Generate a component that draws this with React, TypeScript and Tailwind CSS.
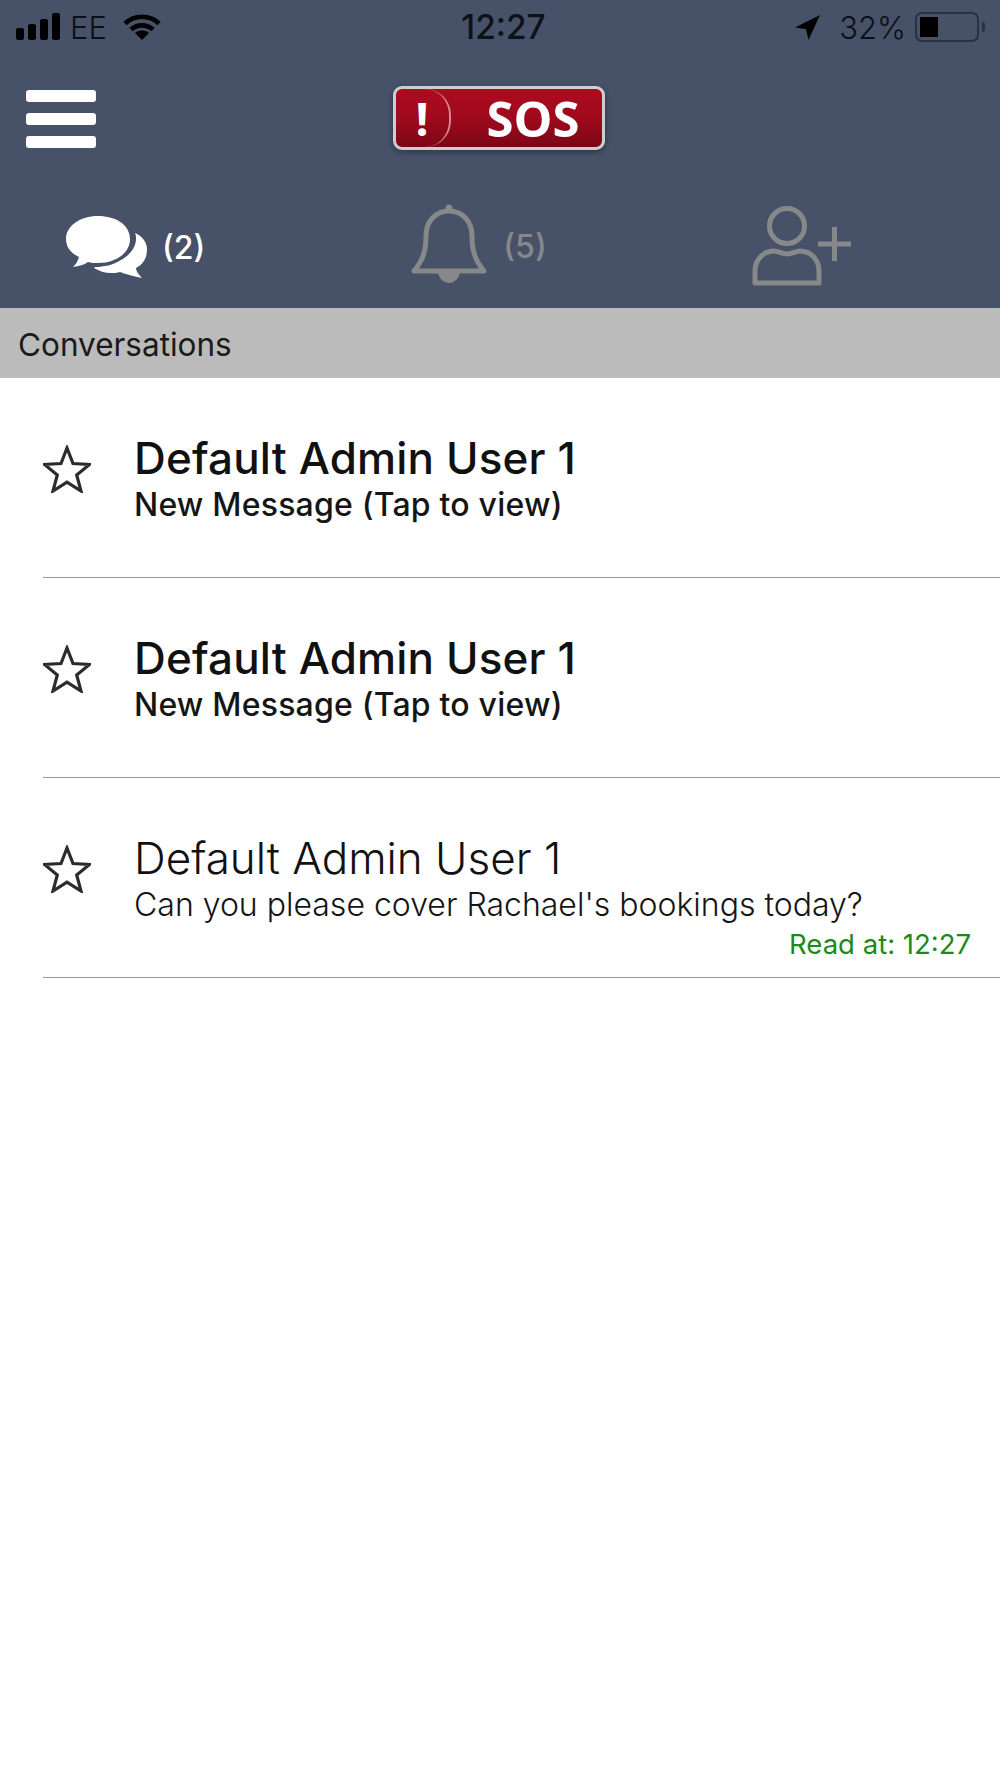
import React from 'react';

const rows = [
  { unread: true, title: 'Default Admin User 1', body: 'New Message (Tap to view)' },
  { unread: true, title: 'Default Admin User 1', body: 'New Message (Tap to view)' },
  { unread: false, title: 'Default Admin User 1', body: "Can you please cover Rachael's bookings today?", read: 'Read at: 12:27' },
];

const StatusBar: React.FC = () => (
  <div className="flex h-[54px] items-center justify-between pl-4 pr-[15px] text-[#0b0f17]">
    <div className="flex w-[340px] items-center">
      <svg width="45" height="28" viewBox="0 0 45 28" fill="#000">
        <rect x="0" y="15" width="8" height="12" rx="2" />
        <rect x="12" y="11" width="8" height="16" rx="2" />
        <rect x="24" y="6" width="8" height="21" rx="2" />
        <rect x="36" y="0" width="8" height="27" rx="2" />
      </svg>
      <span className="ml-[9px] w-[42px] text-[31px] font-light leading-none">EE</span>
      <svg className="ml-[11px]" width="38" height="28" viewBox="0 0 38 28" fill="none" stroke="#000" strokeWidth="4.6">
        <path d="M2 10.5C11.5 1.5 26.5 1.5 36 10.5" />
        <path d="M8 16.5C14 11 24 11 30 16.5" />
        <path d="M19 27l-7-7c4-3.2 10-3.2 14 0z" fill="#000" stroke="none" />
      </svg>
    </div>
    <span className="ml-[6px] mt-[2px] text-[33.5px] font-medium leading-none text-[#0d1118]">12:27</span>
    <div className="flex w-[340px] items-center justify-end">
      <svg width="26" height="26" viewBox="0 0 26 26" fill="#000">
        <path d="M25 1L0 13.5l11 1.5L13.500 26z" />
      </svg>
      <span className="ml-[18px] text-[31px] font-light leading-none">32%</span>
      <div className="relative ml-[9px] flex h-[30px] w-[64px] items-center rounded-[7px] border-2 border-[#2a3140] pl-[3px]">
        <div className="h-[20px] w-[18px] bg-black" />
      </div>
      <div className="ml-[3px] h-[10px] w-[3px] rounded-r-full bg-[#2a3140]" />
    </div>
  </div>
);

const Logo: React.FC = () => (
  <div className="flex h-[64px] w-[212px] items-center rounded-[9px] border-[3px] border-[#cfcdd0] bg-gradient-to-b from-[#ad0a20] via-[#a00a1c] to-[#7a0716] font-['Open_Sans',sans-serif] shadow-[0_2px_6px_rgba(0,0,0,0.35)]">
    <div className="flex h-full w-[55px] items-center justify-center rounded-r-[26px] border-r-2 border-[#d68a93] text-[46px] font-bold leading-none text-white">
      !
    </div>
    <span className="ml-[36px] text-[49px] font-bold leading-none text-white">SOS</span>
  </div>
);

const ChatIcon: React.FC = () => (
  <svg width="82" height="66" viewBox="0 0 82 66" fill="#fff">
    <path d="M32 1C14 1 0 11 0 24c0 7 4 14 13 18-1 4-3 7-6 10 6-1 11-2 15-5 3 1 7 1 10 1 18 0 32-10 32-24S50 1 32 1z" />
    <path d="M69 18c1 2 1 4 1 6 0 8-6 16-15 21-8 5-17 7-26 7l-1 1c5 3 11 5 17 5 3 0 6 0 9-1 5 2 17 5 22 6-3-3-6-7-6-10 7-4 11-9 11-19 0-7-5-13-12-16z" />
  </svg>
);

const BellIcon: React.FC = () => (
  <svg width="76" height="80" viewBox="0 0 76 80" fill="none" stroke="#868889" strokeWidth="5" strokeLinejoin="round">
    <circle cx="38" cy="4" r="3.5" fill="#868889" stroke="none" />
    <path d="M38 7C23 7 15 19 15 32c0 15-3 24-12 35h70c-9-11-12-20-12-35C61 19 53 7 38 7z" />
    <path d="M27 68c1 7 6 11 11 11s10-4 11-11z" fill="#868889" stroke="none" />
  </svg>
);

const AddUserIcon: React.FC = () => (
  <svg width="101" height="80" viewBox="0 0 101 80" fill="none" stroke="#868889" strokeWidth="5" strokeLinejoin="round">
    <circle cx="35" cy="20" r="17.5" />
    <path d="M3 77V65c0-12 9-20 19-20 4 0 8 3 13 3s9-3 13-3c10 0 19 8 19 20v12z" />
    <path d="M66 38h33M82.500 21v34" />
  </svg>
);

const Star: React.FC = () => (
  <svg width="48" height="48" viewBox="0 0 48 48" fill="none" stroke="#2c2c2c" strokeWidth="3.2" strokeLinejoin="miter">
    <path d="M24 3l6 15.500 16.500 1-12.800 10.500 4.300 16L24 37.200 10 46l4.300-16L1.500 19.500l16.500-1z" />
  </svg>
);

export default function App() {
  return (
    <div className="flex min-h-[1778px] flex-col bg-white font-['Inter','Roboto',sans-serif]">
      <header className="flex h-[308px] flex-col bg-[#475268]">
        <StatusBar />
        <div className="relative flex h-[116px] items-start justify-center pt-[32px]">
          <div className="absolute left-[26px] top-[36px] flex w-[70px] flex-col gap-[11px]">
            <div className="h-[12px] rounded-[3px] bg-white" />
            <div className="h-[12px] rounded-[3px] bg-white" />
            <div className="h-[12px] rounded-[3px] bg-white" />
          </div>
          <div className="ml-[-3px]">
            <Logo />
          </div>
        </div>
        <div className="flex flex-1 items-start">
          <div className="ml-[66px] mt-[45px] flex items-center">
            <ChatIcon />
            <span className="ml-[14px] text-[32px] font-medium leading-none text-white">(2)</span>
          </div>
          <div className="ml-[206px] mt-[34px] flex items-center">
            <BellIcon />
            <span className="ml-[16px] mt-[5px] text-[32px] font-medium leading-none text-[#868889]">(5)</span>
          </div>
          <div className="ml-[205px] mt-[36px]">
            <AddUserIcon />
          </div>
        </div>
      </header>

      <div className="flex h-[70px] items-center bg-[#bbbbbb] pl-[18px] pt-[4px] text-[31.5px] leading-none text-[#1a1a1a]">
        Conversations
      </div>

      <main>
        {rows.map((row, i) => (
          <div key={i} className="ml-[43px] flex h-[200px] border-b border-[#999999] pt-[55px]">
            <div className="mt-[12px] w-[91px] shrink-0">
              <Star />
            </div>
            <div className="flex-1 pr-[29px]">
              <div className={`text-[44px] leading-[50px] text-[#111111] ${row.unread ? 'font-medium tracking-[0.15px]' : 'font-light'}`}>
                {row.title}
              </div>
              <div className={`mt-[5px] text-[32px] leading-[34px] text-[#151515] ${row.unread ? 'font-medium tracking-[0.2px]' : 'font-light'}`}>
                {row.body}
              </div>
              {row.read && (
                <div className="mt-[7px] text-right text-[27.5px] leading-[30px] text-[#1b8a1b]">{row.read}</div>
              )}
            </div>
          </div>
        ))}
      </main>
    </div>
  );
}
